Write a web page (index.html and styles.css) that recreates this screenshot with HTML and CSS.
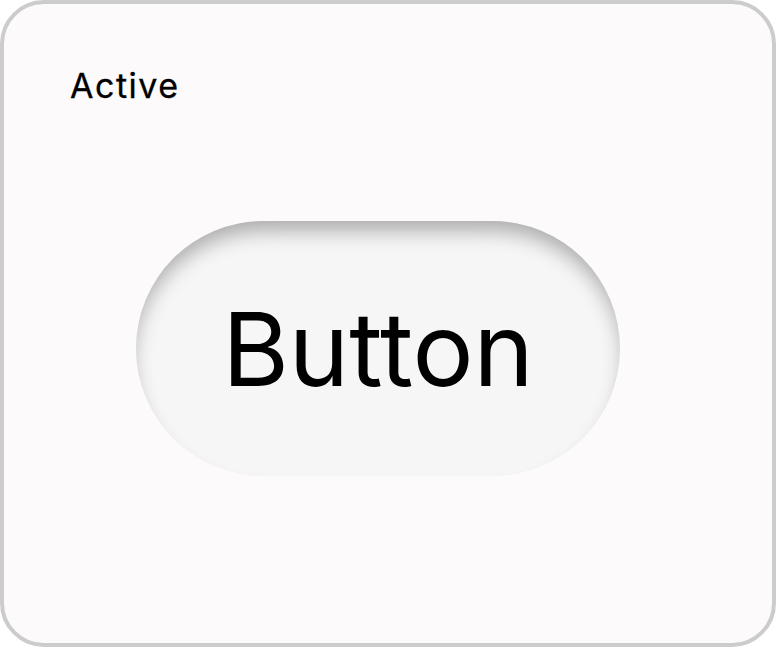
FILE: index.html
```html
<!DOCTYPE html>
<html lang="en">
<head>
<meta charset="utf-8">
<title>Active</title>
<link rel="stylesheet" href="styles.css">
</head>
<body>
<div class="card">
  <div class="label">Active</div>
  <button class="btn" type="button">Button</button>
</div>
</body>
</html>
```
FILE: styles.css
```css
html, body {
  margin: 0;
  padding: 0;
  background: #ffffff;
}

.card {
  box-sizing: border-box;
  width: 776px;
  height: 647px;
  border: 4px solid #cccccc;
  border-radius: 44px;
  background: #fcfafb;
  padding: 62px 0 0 66px;
  display: flex;
  flex-direction: column;
  align-items: flex-start;
  font-family: Inter, "Liberation Sans", sans-serif;
  color: #000;
}

.label {
  font-size: 34px;
  line-height: 40px;
  letter-spacing: 1.5px;
  -webkit-text-stroke: 0.3px #000;
}

.btn {
  margin: 115px 0 0 66px;
  width: 484px;
  height: 255px;
  border: none;
  border-radius: 128px;
  background: #f6f6f6;
  box-shadow: inset 0 14px 20px -4px rgba(0, 0, 0, 0.3);
  font-family: Inter, "Liberation Sans", sans-serif;
  font-size: 102px;
  color: #000;
  padding: 0;
}
```
